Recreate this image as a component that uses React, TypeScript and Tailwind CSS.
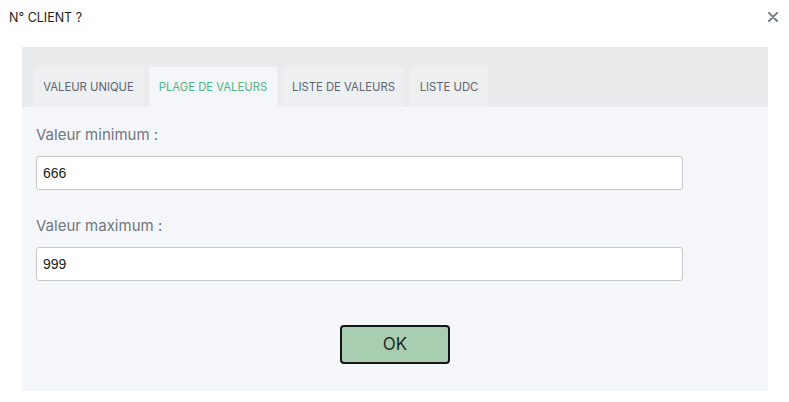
import React from "react";

export default function App() {
  const tabs = [
    { label: "VALEUR UNIQUE", w: "w-[109px]", active: false },
    { label: "PLAGE DE VALEURS", w: "w-[128px]", active: true },
    { label: "LISTE DE VALEURS", w: "w-[121px]", active: false },
    { label: "LISTE UDC", w: "w-[78px]", active: false },
  ];
  return (
    <div className="w-[789px] h-[402px] bg-white relative font-['Inter',sans-serif]">
      <div className="h-[47px] flex items-start justify-between pl-[9px] pr-[11px] pt-[10px]">
        <span className="text-[12.5px] text-[#1c1c1c] leading-[16px]">N° CLIENT ?</span>
        <svg width="10" height="10" viewBox="0 0 10 10" className="mt-[2px]">
          <path d="M1 1L9 9M9 1L1 9" stroke="#7a8088" strokeWidth="2" strokeLinecap="round" />
        </svg>
      </div>
      <div className="ml-[22px] w-[746px] h-[344px] flex flex-col">
        <div className="h-[60px] bg-[#eaebed] flex items-end gap-[6px] pl-[12px]">
          {tabs.map((t) => (
            <div
              key={t.label}
              className={`${t.w} h-[40px] flex items-center justify-center text-[11.3px] ${
                t.active ? "bg-[#f5f6f9] text-[#4fb488]" : "bg-[#eeeff1] text-[#5b6672]"
              }`}
            >
              {t.label}
            </div>
          ))}
        </div>
        <div className="flex-1 bg-[#f5f6fa] pl-[14px] pt-[17px] flex flex-col">
          <div className="text-[15px] text-[#6f7780] leading-[22px]">Valeur minimum :</div>
          <div className="mt-[10px] w-[647px] h-[34px] bg-white border border-[#c8c8c8] rounded-[3px] flex items-center pl-[6px] text-[14px] text-[#222] font-['Liberation_Sans',sans-serif]">
            666
          </div>
          <div className="mt-[25px] text-[15px] text-[#6f7780] leading-[22px]">Valeur maximum :</div>
          <div className="mt-[10px] w-[647px] h-[34px] bg-white border border-[#c8c8c8] rounded-[3px] flex items-center pl-[6px] text-[14px] text-[#222] font-['Liberation_Sans',sans-serif]">
            999
          </div>
          <div className="mt-[44px] flex">
            <div className="ml-[304px] w-[110px] h-[39px] bg-[#a8cdb0] border-2 border-[#151515] rounded-[4px] flex items-center justify-center text-[17px] text-[#1e2a2a]">
              OK
            </div>
          </div>
        </div>
      </div>
    </div>
  );
}
